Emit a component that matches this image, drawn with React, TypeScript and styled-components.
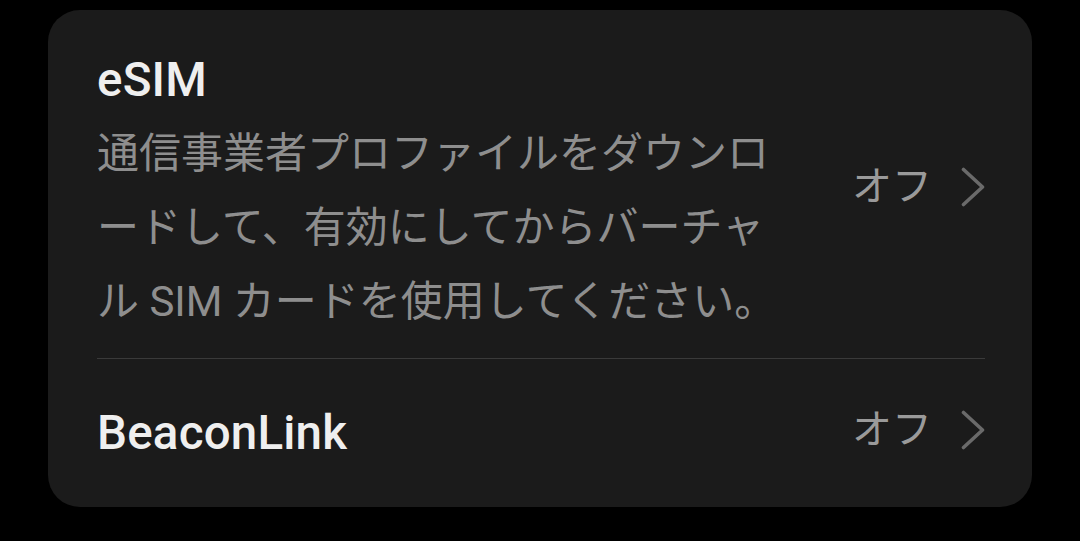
import React from "react";
import styled, { createGlobalStyle } from "styled-components";

const Global = createGlobalStyle`
  html, body { margin: 0; padding: 0; background: #000; }
  body { font-family: Roboto, "Noto Sans CJK JP", sans-serif; }
`;

const Page = styled.div`
  width: 1080px;
  height: 541px;
  background: #000;
  padding: 10px 48px 0 48px;
  box-sizing: border-box;
`;

const Card = styled.div`
  background: #1b1b1b;
  border-radius: 32px;
  padding: 0 47px 0 49px;
  display: flex;
  flex-direction: column;
`;

const Row = styled.div<{ $height: number }>`
  display: flex;
  align-items: center;
  min-height: ${(p) => p.$height}px;
  box-sizing: border-box;
`;

const Divider = styled.div`
  height: 1px;
  background: #3a3a3a;
`;

const TextCol = styled.div<{ $padTop?: number }>`
  flex: 1;
  display: flex;
  flex-direction: column;
  padding-top: ${(p) => p.$padTop ?? 0}px;
`;

const Title = styled.div`
  font-size: 47.5px;
  font-weight: 500;
  line-height: 60px;
  color: #efefef;
  letter-spacing: 0.2px;
`;

const Desc = styled.div`
  font-size: 42px;
  line-height: 74px;
  color: #8e8e8e;
  width: 690px;
  margin-top: 7px;
`;

const Value = styled.div<{ $shift: number }>`
  display: flex;
  align-items: center;
  gap: 29px;
  margin-left: 40px;
  margin-top: ${(p) => (p.$shift > 0 ? p.$shift * 2 : 0)}px;
  margin-bottom: ${(p) => (p.$shift < 0 ? -p.$shift * 2 : 0)}px;
`;

const ValueLabel = styled.span`
  font-size: 40px;
  line-height: 42px;
  padding-bottom: 8px;
  color: #9a9a9a;
  font-family: "Noto Sans CJK JP", sans-serif;
`;

const Chevron = () => (
  <svg width="24" height="40" viewBox="0 0 24 40" fill="none">
    <path
      d="M2.5 2.5 L21.5 20 L2.5 37.5"
      stroke="#6a6a6a"
      strokeWidth="3.6"
      strokeLinecap="round"
      strokeLinejoin="round"
    />
  </svg>
);

export default function App() {
  return (
    <>
      <Global />
      <Page>
        <Card>
          <Row $height={348}>
            <TextCol $padTop={21}>
              <Title>eSIM</Title>
              <Desc>
                通信事業者プロファイルをダウンロードして、有効にしてからバーチャル SIM カードを使用してください。
              </Desc>
            </TextCol>
            <Value $shift={3}>
              <ValueLabel>オフ</ValueLabel>
              <Chevron />
            </Value>
          </Row>
          <Divider />
          <Row $height={148}>
            <TextCol>
              <Title>BeaconLink</Title>
            </TextCol>
            <Value $shift={-3}>
              <ValueLabel>オフ</ValueLabel>
              <Chevron />
            </Value>
          </Row>
        </Card>
      </Page>
    </>
  );
}
